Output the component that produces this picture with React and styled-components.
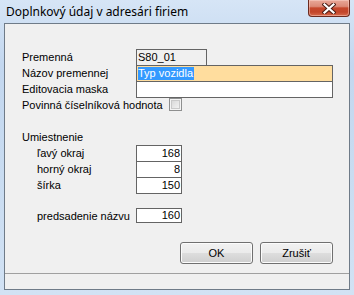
import React from 'react';
import styled, { createGlobalStyle } from 'styled-components';

const Global = createGlobalStyle`
  html, body { margin: 0; padding: 0; background: #cfe0f3; }
  body { width: 354px; height: 295px; overflow: hidden; }
  * { box-sizing: border-box; }
`;

const Window = styled.div`
  width: 354px;
  height: 295px;
  display: flex;
  flex-direction: column;
  padding: 0 4px 5px 4px;
  background: linear-gradient(180deg, #d6e5f6 0%, #c3d7ef 22%, #c9dcf1 60%, #d2e2f4 100%);
  font-family: "Liberation Sans", Arial, sans-serif;
`;

const TitleBar = styled.div`
  height: 23px;
  display: flex;
  align-items: flex-start;
  justify-content: space-between;
`;

const Title = styled.div`
  font-family: "Noto Sans", "Segoe UI", sans-serif;
  font-size: 12px;
  line-height: 16px;
  color: #000;
  padding: 4px 0 0 2px;
`;

const CloseBtn = styled.div`
  width: 42px;
  height: 17px;
  border: 1px solid #6b2a1f;
  border-top: none;
  border-radius: 0 0 4px 4px;
  background: linear-gradient(180deg, #e9a899 0%, #dc8a77 40%, #c6482d 50%, #c2452a 75%, #d76a4c 100%);
  box-shadow: inset 0 0 0 1px rgba(255, 220, 210, 0.45);
  display: flex;
  align-items: center;
  justify-content: center;
`;

const Client = styled.div`
  flex: 1;
  display: flex;
  flex-direction: column;
  border: 1px solid #6f7b88;
  background: #f0f0f0;
  font-size: 11px;
  color: #000;
`;

const Content = styled.div`
  flex: 1;
  display: flex;
  flex-direction: column;
  padding: 25px 16px 0 17px;
`;

const FormGrid = styled.div`
  display: grid;
  grid-template-columns: ${p => p.$label}px 1fr;
  grid-auto-rows: ${p => p.$row || 16}px;
  margin-top: ${p => p.$top || 0}px;
`;

const Label = styled.div`
  line-height: 16px;
  white-space: nowrap;
  padding-left: ${p => p.$indent || 0}px;
  grid-column: ${p => (p.$full ? '1 / -1' : 'auto')};
`;

const Field = styled.div`
  width: ${p => p.$w}px;
  height: ${p => p.$h || 17}px;
  border: 1px solid #646464;
  background: ${p => p.$bg || '#fff'};
  line-height: ${p => (p.$h || 17) - 3}px;
  padding: 0 1px;
  text-align: ${p => (p.$right ? 'right' : 'left')};
  white-space: nowrap;
  overflow: hidden;
`;

const Selected = styled.span`
  display: inline-block;
  background: #3399ff;
  color: #fff;
  line-height: 13px;
  padding-right: 1px;
`;

const Checkbox = styled.div`
  width: 13px;
  height: 13px;
  margin: 1px 0 0 33px;
  border: 1px solid #8e8f8f;
  background: linear-gradient(135deg, #d2d2d2 0%, #e6e6e6 50%, #f7f7f7 100%);
  box-shadow: inset 0 0 0 1px #f4f4f4, inset 0 0 0 2px #c9c9c9;
`;

const Buttons = styled.div`
  display: flex;
  justify-content: flex-end;
  gap: 7px;
  margin-top: 19px;
`;

const Button = styled.div`
  width: 73px;
  height: 22px;
  border: 1px solid #707070;
  border-radius: 3px;
  background: linear-gradient(180deg, #f2f2f2 0%, #ebebeb 48%, #dddddd 52%, #cfcfcf 100%);
  box-shadow: inset 0 0 0 1px #fcfcfc;
  display: flex;
  align-items: center;
  justify-content: center;
  font-size: 11px;
  line-height: 14px;
`;

const StatusStrip = styled.div`
  height: 16px;
  border-top: 1px solid #a0a0a0;
  background: #f0f0f0;
`;

export default function App() {
  return (
    <>
      <Global />
      <Window>
        <TitleBar>
          <Title>Doplnkový údaj v adresári firiem</Title>
          <CloseBtn>
            <svg width="14" height="11" viewBox="0 0 14 11">
              <path d="M2.5 1.5 L11.5 9.5 M11.5 1.5 L2.5 9.5" stroke="#4a1c14" strokeWidth="4.2" strokeLinecap="square" />
              <path d="M2.5 1.5 L11.5 9.5 M11.5 1.5 L2.5 9.5" stroke="#ffffff" strokeWidth="2.2" strokeLinecap="square" />
            </svg>
          </CloseBtn>
        </TitleBar>
        <Client>
          <Content>
            <FormGrid $label={114}>
              <Label>Premenná</Label>
              <Field $w={71} $bg="#f0f0f0">S80_01</Field>
              <Label>Názov premennej</Label>
              <Field $w={197} $bg="#ffdd9e"><Selected>Typ vozidla</Selected></Field>
              <Label>Editovacia maska</Label>
              <Field $w={197} />
              <Label>Povinná číselníková hodnota</Label>
              <Checkbox />
            </FormGrid>
            <FormGrid $label={114} $top={16}>
              <Label $full>Umiestnenie</Label>
              <Label $indent={15}>ľavý okraj</Label>
              <Field $w={46} $right>168</Field>
              <Label $indent={15}>horný okraj</Label>
              <Field $w={46} $right>8</Field>
              <Label $indent={15}>šírka</Label>
              <Field $w={46} $right>150</Field>
            </FormGrid>
            <FormGrid $label={114} $top={15} $row={15}>
              <Label $indent={15}>predsadenie názvu</Label>
              <Field $w={46} $h={15} $right>160</Field>
            </FormGrid>
            <Buttons>
              <Button>OK</Button>
              <Button>Zrušiť</Button>
            </Buttons>
          </Content>
          <StatusStrip />
        </Client>
      </Window>
    </>
  );
}
